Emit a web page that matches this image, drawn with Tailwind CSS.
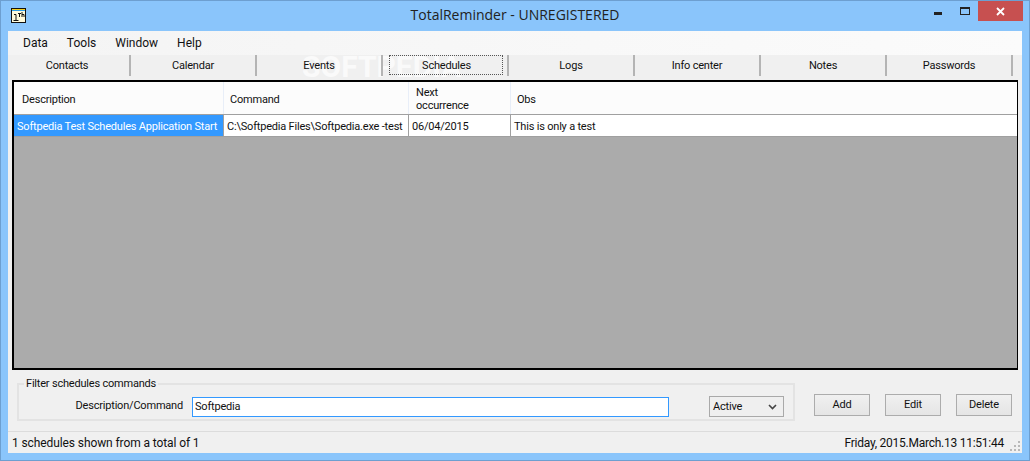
<!DOCTYPE html>
<html lang="en">
<head>
  <meta charset="UTF-8" />
  <title>TotalReminder - UNREGISTERED</title>
  <script src="https://cdn.jsdelivr.net/npm/@tailwindcss/browser@4"></script>
</head>
<body class="w-[1030px] h-[461px] overflow-hidden font-['Roboto',sans-serif] text-[11px] tracking-[-0.2px] text-[#111]">
  <div class="relative flex flex-col w-[1030px] h-[461px] border border-[#6d9fd0] bg-[#8ac5fb] px-[7px] pb-[7px]">

    <!-- title bar -->
    <div class="relative flex items-center justify-center h-[30px] shrink-0">
      <svg class="absolute left-[3px] top-[7px]" width="15" height="15" viewBox="0 0 15 15">
        <rect x="0.5" y="0.5" width="14" height="14" fill="#fffbdc" stroke="#111" />
        <rect x="1" y="1" width="13" height="1" fill="#f5d020" />
        <rect x="1" y="2" width="13" height="1" fill="#2f9fe8" />
        <path d="M3 6.500h2v6M2.500 12.500h5" fill="none" stroke="#111" />
        <path d="M7 5.500h3M8.500 5v4M11 4v5M11 6.500h2v2.500" fill="none" stroke="#111" />
      </svg>
      <span class="font-['Open_Sans',sans-serif] text-[14px] tracking-normal mb-[3px] text-[#222]">TotalReminder - UNREGISTERED</span>
      <div class="absolute right-[-1px] top-0 flex items-start">
        <div class="w-[8px] h-[3px] bg-[#222] mr-[18px] mt-[11px]"></div>
        <div class="w-[10px] h-[8px] border border-[#222] border-t-2 mr-[8px] mt-[6px]"></div>
        <div class="flex items-center justify-center w-[45px] h-[20px] bg-[#c75050]">
          <svg width="9" height="9" viewBox="0 0 9 9"><path d="M1 1l7 7M8 1l-7 7" stroke="#fff" stroke-width="1.800" /></svg>
        </div>
      </div>
    </div>

    <!-- client area -->
    <div class="relative flex flex-col flex-1 min-h-0 overflow-hidden bg-[#f0f0f0]">
      <div class="flex items-center h-[24px] shrink-0 pl-[6px] bg-gradient-to-r from-[#f4f4f4] to-[#fbfbfb] text-[12px] tracking-normal">
        <span class="px-[9px]">Data</span>
        <span class="px-[10px]">Tools</span>
        <span class="px-[9px]">Window</span>
        <span class="pl-[10px]">Help</span>
      </div>

      <!-- watermark -->
      <div class="absolute left-[294px] top-[19px] text-[30px] leading-[34px] font-bold tracking-normal text-white/70 pointer-events-none whitespace-nowrap">SOFTPEDIA</div>

      <div class="relative flex h-[25px] shrink-0 ml-[-3px]">
        <div class="flex items-start justify-center w-[126px] h-[21px] pt-[3px] border-r-2 border-[#b4b4b4]">Contacts</div>
        <div class="flex items-start justify-center w-[126px] h-[21px] pt-[3px] border-r-2 border-[#b4b4b4]">Calendar</div>
        <div class="flex items-start justify-center w-[126px] h-[21px] pt-[3px] border-r-2 border-[#b4b4b4]">Events</div>
        <div class="flex w-[126px] h-[21px] border-r-2 border-[#b4b4b4] pl-[6px]">
          <div class="flex items-center justify-center w-[114px] h-[20px] pt-[2px] pl-[1px] border border-dotted border-[#555]">Schedules</div>
        </div>
        <div class="flex items-start justify-center w-[126px] h-[21px] pt-[3px] border-r-2 border-[#b4b4b4]">Logs</div>
        <div class="flex items-start justify-center w-[126px] h-[21px] pt-[3px] border-r-2 border-[#b4b4b4]">Info center</div>
        <div class="flex items-start justify-center w-[126px] h-[21px] pt-[3px] border-r-2 border-[#b4b4b4]">Notes</div>
        <div class="flex items-start justify-center w-[126px] h-[21px] pt-[3px] border-r-2 border-[#b4b4b4]">Passwords</div>
      </div>

      <!-- grid -->
      <div class="flex flex-col h-[290px] shrink-0 mx-[4px] border-2 border-black border-r bg-[#ababab]">
        <div class="grid grid-cols-[210px_185px_102px_1fr] h-[33px] shrink-0 bg-[#fcfcfc] border-b border-[#a0a0a0]">
          <div class="flex items-center pl-[8px] pt-[5px] border-r border-[#e8eef8]">Description</div>
          <div class="flex items-center pl-[6px] pt-[5px] border-r border-[#e8eef8]">Command</div>
          <div class="flex items-center pl-[7px] pt-[1px] border-r border-[#e8eef8] leading-[13px]">Next<br />occurrence</div>
          <div class="flex items-center pl-[6px] pt-[5px]">Obs</div>
        </div>
        <div class="grid grid-cols-[210px_185px_102px_1fr] h-[22px] shrink-0 bg-white border-b border-[#a0a0a0]">
          <div class="flex items-center pl-[3px] pt-[3px] bg-[#3399ff] text-white whitespace-nowrap border-r border-[#a0a0a0]">Softpedia Test Schedules Application Start</div>
          <div class="flex items-center pl-[3px] pt-[3px] border-r border-[#a0a0a0] whitespace-nowrap">C:\Softpedia Files\Softpedia.exe -test</div>
          <div class="flex items-center pl-[3px] pt-[3px] border-r border-[#a0a0a0]">06/04/2015</div>
          <div class="flex items-center pl-[3px] pt-[3px]">This is only a test</div>
        </div>
      </div>

      <!-- filter row -->
      <div class="flex flex-1 min-h-0 pl-[9px]">
        <fieldset class="w-[778px] h-[45px] mt-[6px] border-2 border-[#e3e3e3] pl-[4px] pr-0">
          <legend class="ml-[1px] px-[2px] leading-[16px]">Filter schedules commands</legend>
          <div class="flex items-center mt-[4px]">
            <span class="w-[160px] text-right">Description/Command</span>
            <input class="w-[477px] h-[20px] ml-[9px] pl-[2px] border border-[#3399ff] bg-white outline-none" value="Softpedia" />
            <div class="flex items-center justify-between w-[75px] h-[21px] ml-[40px] pl-[3px] pr-[6px] pt-[1px] border border-[#a9a9a9] bg-[#efefef]">
              <span>Active</span>
              <svg width="9" height="6" viewBox="0 0 9 6"><path d="M1 1l3.500 3.500L8 1" fill="none" stroke="#444" stroke-width="1.600" /></svg>
            </div>
          </div>
        </fieldset>
        <div class="flex gap-[15px] ml-[19px] mt-[24px]">
          <button class="w-[56px] h-[22px] border border-[#acacac] bg-gradient-to-b from-[#f0f0f0] to-[#e5e5e5]">Add</button>
          <button class="w-[56px] h-[22px] border border-[#acacac] bg-gradient-to-b from-[#f0f0f0] to-[#e5e5e5]">Edit</button>
          <button class="w-[56px] h-[22px] border border-[#acacac] bg-gradient-to-b from-[#f0f0f0] to-[#e5e5e5]">Delete</button>
        </div>
      </div>

      <!-- status bar -->
      <div class="flex items-center justify-between h-[22px] shrink-0 border-t border-[#dcdcdc] pl-[4px] pr-[18px] text-[12px] tracking-[-0.1px]">
        <span>1 schedules shown from a total of 1</span>
        <span class="tracking-[-0.25px]">Friday, 2015.March.13 11:51:44</span>
      </div>
      <svg class="absolute right-[2px] bottom-[2px]" width="10" height="10" viewBox="0 0 10 10" fill="#b8b8b8">
        <rect x="8" y="0" width="2" height="2" /><rect x="4" y="4" width="2" height="2" /><rect x="8" y="4" width="2" height="2" />
        <rect x="0" y="8" width="2" height="2" /><rect x="4" y="8" width="2" height="2" /><rect x="8" y="8" width="2" height="2" />
      </svg>
    </div>
  </div>
</body>
</html>
